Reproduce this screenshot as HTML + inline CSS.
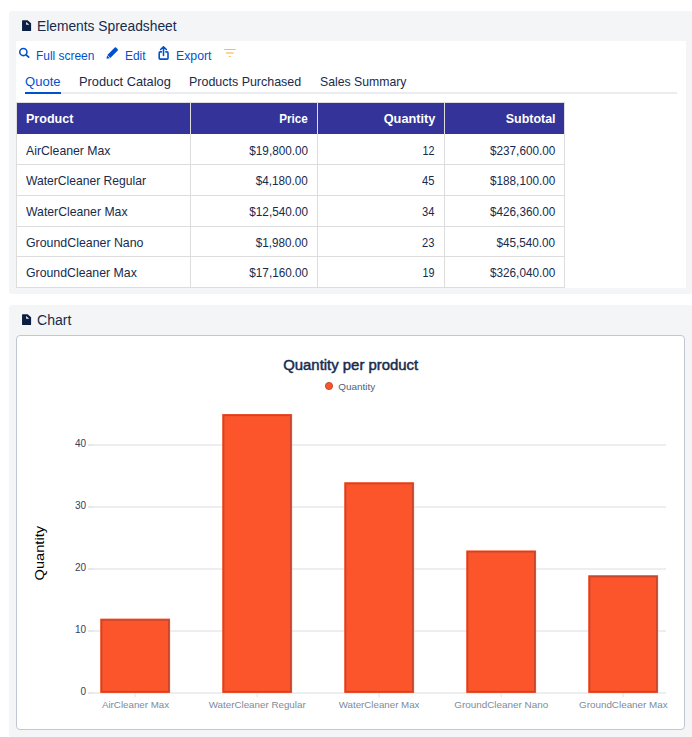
<!DOCTYPE html>
<html>
<head>
<meta charset="utf-8">
<title>Elements Spreadsheet</title>
<style>
html,body{margin:0;padding:0;background:#fff;}
body{width:692px;height:737px;overflow:hidden;position:relative;font-family:"Liberation Sans",sans-serif;color:#172B4D;}
.abs{position:absolute;}
.t{position:absolute;white-space:nowrap;line-height:16px;height:16px;display:block;}
.panel{position:absolute;left:9px;width:684px;background:#F4F5F7;border-radius:3px;}
#p1{top:11px;height:283px;}
#p2{top:305px;height:432px;}
.white{position:absolute;background:#fff;}
.hl{position:absolute;left:16px;width:549px;height:1px;background:#DDDDDD;}
.vl{position:absolute;top:102px;width:1px;height:186px;background:#DDDDDD;}
#thead{position:absolute;left:17px;top:103px;width:547px;height:31px;background:#333399;}
#chartbox{position:absolute;left:16px;top:335px;width:669px;height:395px;box-sizing:border-box;border:1px solid #C1C7D0;border-radius:4px;background:#fff;}
svg text{font-family:"Liberation Sans",sans-serif;}
</style>
</head>
<body>
<!-- ============ Panel 1 : Elements Spreadsheet ============ -->
<div class="panel" id="p1"></div>
<div class="white" style="left:16px;top:41px;width:670px;height:247px;"></div>



<!-- tabs -->
<div class="abs" style="left:25px;top:92px;width:652px;height:2px;background:#EBECF0;"></div>
<div class="abs" style="left:25px;top:92px;width:36px;height:2px;background:#0052CC;"></div>
<span class="t" style="top:18.35px;font-size:14px;color:#172B4D;left:37.3px;transform-origin:0 50%;transform:scaleX(0.9856);">Elements Spreadsheet</span>
<span class="t" style="top:47.83px;font-size:12.6px;color:#0052CC;left:36.1px;transform-origin:0 50%;transform:scaleX(0.9481);">Full screen</span>
<span class="t" style="top:47.83px;font-size:12.6px;color:#0052CC;left:124.7px;transform-origin:0 50%;transform:scaleX(0.9492);">Edit</span>
<span class="t" style="top:47.83px;font-size:12.6px;color:#0052CC;left:175.5px;transform-origin:0 50%;transform:scaleX(0.9751);">Export</span>
<span class="t" style="top:73.83px;font-size:12.6px;color:#0052CC;left:25.3px;transform-origin:0 50%;transform:scaleX(1.0375);">Quote</span>
<span class="t" style="top:73.83px;font-size:12.6px;color:#172B4D;left:78.9px;transform-origin:0 50%;transform:scaleX(1.0165);">Product Catalog</span>
<span class="t" style="top:73.83px;font-size:12.6px;color:#172B4D;left:188.5px;transform-origin:0 50%;transform:scaleX(0.9894);">Products Purchased</span>
<span class="t" style="top:73.83px;font-size:12.6px;color:#172B4D;left:319.6px;transform-origin:0 50%;transform:scaleX(0.9731);">Sales Summary</span>

<!-- table -->
<div class="hl" style="top:102px"></div>
<div id="thead"></div>
<div class="hl" style="top:164px"></div>
<div class="hl" style="top:195px"></div>
<div class="hl" style="top:225.5px"></div>
<div class="hl" style="top:256px"></div>
<div class="hl" style="top:287px"></div>
<div class="vl" style="left:16px"></div>
<div class="vl" style="left:190px"></div>
<div class="vl" style="left:317px"></div>
<div class="vl" style="left:444px"></div>
<div class="vl" style="left:564px"></div>
<span class="t" style="top:111.36px;font-size:13.4px;color:#FFFFFF;font-weight:bold;left:25.6px;transform-origin:0 50%;transform:scaleX(0.9369);">Product</span>
<span class="t" style="top:111.36px;font-size:13.4px;color:#FFFFFF;font-weight:bold;right:384.4px;transform-origin:100% 50%;transform:scaleX(0.8729);">Price</span>
<span class="t" style="top:111.36px;font-size:13.4px;color:#FFFFFF;font-weight:bold;right:257.2px;transform-origin:100% 50%;transform:scaleX(0.9501);">Quantity</span>
<span class="t" style="top:111.36px;font-size:13.4px;color:#FFFFFF;font-weight:bold;right:136.8px;transform-origin:100% 50%;transform:scaleX(0.9298);">Subtotal</span>
<span class="t" style="top:142.50px;font-size:13px;color:#172B4D;left:26.3px;transform-origin:0 50%;transform:scaleX(0.9431);">AirCleaner Max</span>
<span class="t" style="top:142.50px;font-size:13px;color:#172B4D;right:384.4px;transform-origin:100% 50%;transform:scaleX(0.9035);">$19,800.00</span>
<span class="t" style="top:142.50px;font-size:13px;color:#172B4D;right:257.4px;transform-origin:100% 50%;transform:scaleX(0.8294);">12</span>
<span class="t" style="top:142.50px;font-size:13px;color:#172B4D;right:136.8px;transform-origin:100% 50%;transform:scaleX(0.9032);">$237,600.00</span>
<span class="t" style="top:173.10px;font-size:13px;color:#172B4D;left:26.3px;transform-origin:0 50%;transform:scaleX(0.9312);">WaterCleaner Regular</span>
<span class="t" style="top:173.10px;font-size:13px;color:#172B4D;right:384.4px;transform-origin:100% 50%;transform:scaleX(0.8990);">$4,180.00</span>
<span class="t" style="top:173.10px;font-size:13px;color:#172B4D;right:257.4px;transform-origin:100% 50%;transform:scaleX(0.8570);">45</span>
<span class="t" style="top:173.10px;font-size:13px;color:#172B4D;right:136.8px;transform-origin:100% 50%;transform:scaleX(0.9032);">$188,100.00</span>
<span class="t" style="top:203.70px;font-size:13px;color:#172B4D;left:26.3px;transform-origin:0 50%;transform:scaleX(0.9408);">WaterCleaner Max</span>
<span class="t" style="top:203.70px;font-size:13px;color:#172B4D;right:384.4px;transform-origin:100% 50%;transform:scaleX(0.9035);">$12,540.00</span>
<span class="t" style="top:203.70px;font-size:13px;color:#172B4D;right:257.4px;transform-origin:100% 50%;transform:scaleX(0.8570);">34</span>
<span class="t" style="top:203.70px;font-size:13px;color:#172B4D;right:136.8px;transform-origin:100% 50%;transform:scaleX(0.9032);">$426,360.00</span>
<span class="t" style="top:234.50px;font-size:13px;color:#172B4D;left:26.3px;transform-origin:0 50%;transform:scaleX(0.9508);">GroundCleaner Nano</span>
<span class="t" style="top:234.50px;font-size:13px;color:#172B4D;right:384.4px;transform-origin:100% 50%;transform:scaleX(0.8990);">$1,980.00</span>
<span class="t" style="top:234.50px;font-size:13px;color:#172B4D;right:257.4px;transform-origin:100% 50%;transform:scaleX(0.8570);">23</span>
<span class="t" style="top:234.50px;font-size:13px;color:#172B4D;right:136.8px;transform-origin:100% 50%;transform:scaleX(0.9020);">$45,540.00</span>
<span class="t" style="top:265.10px;font-size:13px;color:#172B4D;left:26.3px;transform-origin:0 50%;transform:scaleX(0.9465);">GroundCleaner Max</span>
<span class="t" style="top:265.10px;font-size:13px;color:#172B4D;right:384.4px;transform-origin:100% 50%;transform:scaleX(0.9035);">$17,160.00</span>
<span class="t" style="top:265.10px;font-size:13px;color:#172B4D;right:257.4px;transform-origin:100% 50%;transform:scaleX(0.8294);">19</span>
<span class="t" style="top:265.10px;font-size:13px;color:#172B4D;right:136.8px;transform-origin:100% 50%;transform:scaleX(0.9032);">$326,040.00</span>

<!-- ============ Panel 2 : Chart ============ -->
<div class="panel" id="p2"></div>
<span class="t" style="top:312.35px;font-size:14px;color:#172B4D;left:36.8px;transform-origin:0 50%;transform:scaleX(1.0048);">Chart</span>
<div id="chartbox"></div>

<svg class="abs" style="left:0;top:0" width="692" height="737" viewBox="0 0 692 737">
  <!-- icons -->
  <g id="fileicon1">
    <path d="M22.6 20.25h5l3.5 2.95v7.25a0.55 0.55 0 0 1 -0.55 0.55h-7.95a0.55 0.55 0 0 1 -0.55 -0.55v-9.65a0.55 0.55 0 0 1 0.55 -0.55z" fill="#091E42"/>
    <path d="M26.1 22.0v2.85h3.2z" fill="#F0F2F5"/>
  </g>
  <g id="fileicon2" transform="translate(0,294)">
    <path d="M22.6 20.25h5l3.5 2.95v7.25a0.55 0.55 0 0 1 -0.55 0.55h-7.95a0.55 0.55 0 0 1 -0.55 -0.55v-9.65a0.55 0.55 0 0 1 0.55 -0.55z" fill="#091E42"/>
    <path d="M26.1 22.0v2.85h3.2z" fill="#F0F2F5"/>
  </g>
  <g id="searchicon" fill="none" stroke="#0052CC">
    <circle cx="23.35" cy="52" r="3.6" stroke-width="1.55"/>
    <path d="M26.1 54.8L28.7 57.2" stroke-width="1.7" stroke-linecap="round"/>
  </g>
  <g id="pencilicon" transform="translate(116.9,48.4) rotate(135)" fill="#0052CC">
    <path d="M0.9 -2.1h10.5v4.2h-10.5a0.9 0.9 0 0 1 -0.9 -0.9v-2.4a0.9 0.9 0 0 1 0.9 -0.9z"/>
    <path d="M12.0 -2v4l2.7 -2z"/>
  </g>
  <g id="exporticon" fill="none" stroke="#0052CC" stroke-width="1.6" stroke-linecap="round" stroke-linejoin="round">
    <path d="M163.5 47.1V55.5M160.6 49.5L163.5 46.8L166.4 49.5"/>
    <path d="M161.3 51.9H160.2a1 1 0 0 0 -1 1V58.15a1 1 0 0 0 1 1H167a1 1 0 0 0 1 -1V52.9a1 1 0 0 0 -1 -1H165.9"/>
  </g>
  <g id="filtericon">
    <rect x="224" y="49" width="11.7" height="1" fill="#F6C244"/>
    <rect x="226" y="52.1" width="7.6" height="1.7" fill="#F8D084"/>
    <rect x="228.8" y="56" width="2.2" height="1" fill="#F6CA5C"/>
  </g>
  <g stroke="#EDEEF0" stroke-width="2">
    <line x1="88" x2="666" y1="445" y2="445"/>
    <line x1="88" x2="666" y1="507" y2="507"/>
    <line x1="88" x2="666" y1="569" y2="569"/>
    <line x1="88" x2="666" y1="631" y2="631"/>
    <line x1="88" x2="666" y1="693" y2="693"/>
  </g>
  <g stroke="#E7E8EB" stroke-width="2">
    <line x1="88" x2="94" y1="445" y2="445"/>
    <line x1="88" x2="94" y1="507" y2="507"/>
    <line x1="88" x2="94" y1="569" y2="569"/>
    <line x1="88" x2="94" y1="631" y2="631"/>
    <line x1="88" x2="94" y1="693" y2="693"/>
  </g>
  <g stroke="#E2E3E5" stroke-width="1">
    <line x1="135.1" x2="135.1" y1="693" y2="697.3"/>
    <line x1="257.1" x2="257.1" y1="693" y2="697.3"/>
    <line x1="379.1" x2="379.1" y1="693" y2="697.3"/>
    <line x1="501.1" x2="501.1" y1="693" y2="697.3"/>
    <line x1="623.1" x2="623.1" y1="693" y2="697.3"/>
  </g>
  <g fill="#FC552C">
    <rect x="100.2" y="618.6" width="69.9" height="74.4"/>
    <rect x="222.2" y="414.0" width="69.9" height="279.0"/>
    <rect x="344.2" y="482.2" width="69.9" height="210.8"/>
    <rect x="466.2" y="550.4" width="69.9" height="142.6"/>
    <rect x="588.2" y="575.2" width="69.9" height="117.8"/>
  </g>
  <g fill="none" stroke="#C4482E" stroke-width="1.5">
    <rect x="101.55" y="619.95" width="67.20" height="71.70"/>
    <rect x="223.55" y="415.35" width="67.20" height="276.30"/>
    <rect x="345.55" y="483.55" width="67.20" height="208.10"/>
    <rect x="467.55" y="551.75" width="67.20" height="139.90"/>
    <rect x="589.55" y="576.55" width="67.20" height="115.10"/>
  </g>
  <text x="283.2" y="370" font-size="13.8" fill="#172B4D" stroke="#172B4D" stroke-width="0.45" textLength="135" lengthAdjust="spacingAndGlyphs">Quantity per product</text>
  <circle cx="329" cy="386" r="3.55" fill="#FC552C" stroke="#C4482E" stroke-width="1"/>
  <text x="338.2" y="390" font-size="9.8" fill="#505F79" textLength="37" lengthAdjust="spacingAndGlyphs">Quantity</text>
  <g font-size="10" fill="#33415C" text-anchor="end">
    <text x="86" y="447">40</text>
    <text x="86" y="509">30</text>
    <text x="86" y="571">20</text>
    <text x="86" y="633">10</text>
    <text x="86" y="695">0</text>
  </g>
  <g font-size="9.6" fill="#808A99">
    <text x="101.9" y="708" textLength="67.3" lengthAdjust="spacingAndGlyphs">AirCleaner Max</text>
    <text x="208.7" y="708" textLength="97" lengthAdjust="spacingAndGlyphs">WaterCleaner Regular</text>
    <text x="338.7" y="708" textLength="80.8" lengthAdjust="spacingAndGlyphs">WaterCleaner Max</text>
    <text x="454.2" y="708" textLength="94" lengthAdjust="spacingAndGlyphs">GroundCleaner Nano</text>
    <text x="579" y="708" textLength="88.7" lengthAdjust="spacingAndGlyphs">GroundCleaner Max</text>
  </g>
  <text transform="translate(43.6,580.4) rotate(-90)" font-size="13.4" fill="#000" textLength="54.4" lengthAdjust="spacingAndGlyphs">Quantity</text>
</svg>
</body>
</html>
